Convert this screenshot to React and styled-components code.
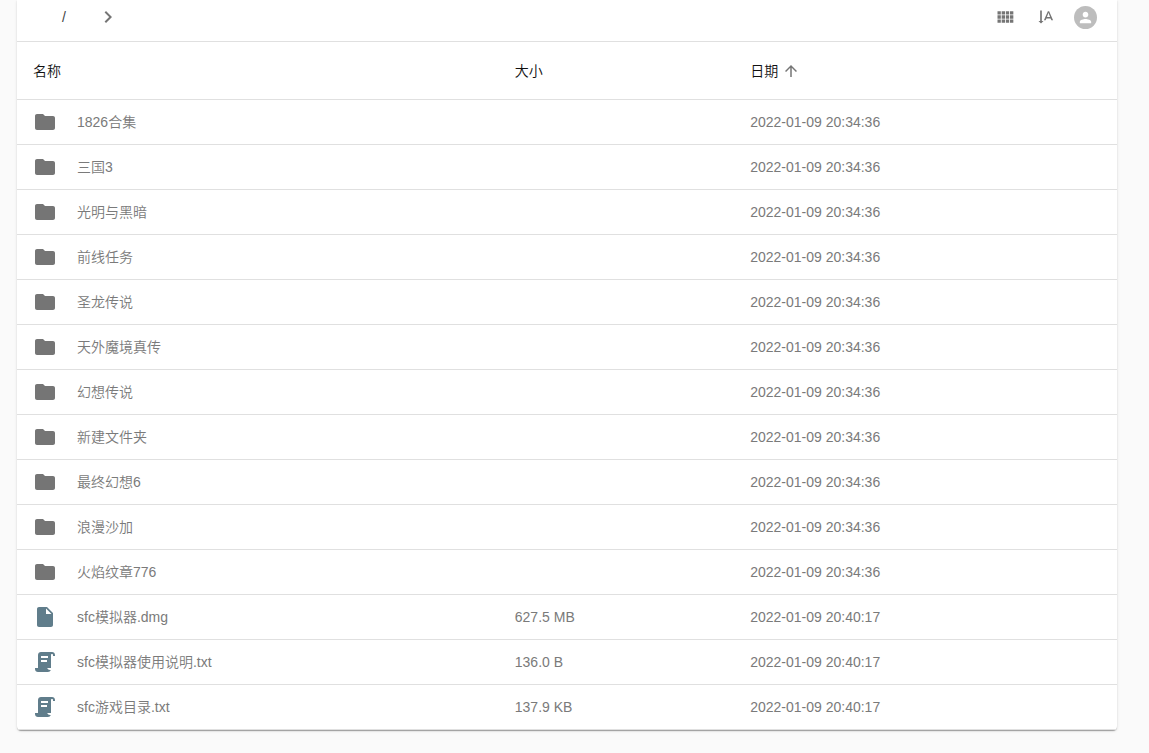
// Import necessary libraries
import React from 'react';
import styled, { createGlobalStyle } from 'styled-components';
import {
  MdArrowUpward,
  MdChevronRight,
  MdFolder,
  MdInsertDriveFile,
  MdPerson,
  MdTextRotateVertical,
} from 'react-icons/md';

const GlobalStyle = createGlobalStyle`
  * {
    box-sizing: border-box;
  }

  body {
    margin: 0;
    background: #fafafa;
    font-family: 'Liberation Sans', 'Noto Sans CJK SC', sans-serif;
    font-size: 14px;
    line-height: 20px;
  }
`;

// Styled Components
const Page = styled.main`
  padding: 0 32px 22px 17px;
`;

const Card = styled.section`
  background: #fff;
  border-radius: 0 0 4px 4px;
  box-shadow: 0 2px 1px -1px rgba(0, 0, 0, 0.2), 0 1px 1px 0 rgba(0, 0, 0, 0.14),
    0 1px 3px 0 rgba(0, 0, 0, 0.12);
`;

const Toolbar = styled.header`
  display: flex;
  align-items: center;
  justify-content: space-between;
  padding: 0 20px 7px 34px;
  border-bottom: 1px solid #e0e0e0;
`;

const Breadcrumb = styled.nav`
  display: flex;
  align-items: center;
  gap: 19px;
  color: #757575;
`;

const Actions = styled.div`
  display: flex;
  align-items: center;
  gap: 1px;
`;

const PlainButton = styled.button`
  display: inline-flex;
  align-items: center;
  justify-content: center;
  padding: 0;
  border: none;
  background: none;
  color: inherit;
  font: inherit;
  cursor: pointer;
`;

const PathButton = styled(PlainButton)`
  width: 26px;
  height: 34px;
  color: #424242;
`;

const IconButton = styled(PlainButton)`
  padding: 7px 10px;
  color: #757575;
`;

const Avatar = styled(PlainButton)`
  width: 23px;
  height: 23px;
  margin-left: 7px;
  border-radius: 50%;
  background: #bdbdbd;
  color: #fff;
`;

const Table = styled.table`
  width: 100%;
  table-layout: fixed;
  border-collapse: separate;
  border-spacing: 0;
`;

const HeadCell = styled.th`
  width: ${({ $width }) => $width};
  height: 58px;
  padding: 0 16px;
  border-bottom: 1px solid #e0e0e0;
  color: #111;
  font-weight: 350;
  text-align: left;
`;

const SortButton = styled(PlainButton)`
  gap: 4px;

  svg {
    color: #757575;
  }
`;

const Cell = styled.td`
  height: 45px;
  padding: 0 16px;
  border-bottom: 1px solid #e0e0e0;
  color: #7a7a7a;
  font-weight: 350;
`;

const FileName = styled.div`
  display: flex;
  align-items: center;
  gap: 20px;

  svg {
    flex-shrink: 0;
    color: ${({ $folder }) => ($folder ? '#757575' : '#607d8b')};
  }
`;

const ViewGridIcon = () => (
  <svg width="20" height="20" viewBox="0 0 24 24" fill="currentColor" aria-hidden="true">
    <path d="M3 9h4V5H3v4zm0 5h4v-4H3v4zm5 0h4v-4H8v4zm5 0h4v-4h-4v4zM8 9h4V5H8v4zm5-4v4h4V5h-4zm5 9h4v-4h-4v4zM3 19h4v-4H3v4zm5 0h4v-4H8v4zm5 0h4v-4h-4v4zm5 0h4v-4h-4v4zm0-14v4h4V5h-4z" />
  </svg>
);

const ScriptIcon = () => (
  <svg width="24" height="24" viewBox="0 0 24 24" fill="currentColor" aria-hidden="true">
    <path d="M17.8 20C17.4 21.2 16.3 22 15 22H5C3.3 22 2 20.7 2 19V18H14.2C14.6 19.2 15.7 20 17 20H17.8M19 2C20.7 2 22 3.3 22 5V6H20V5C20 4.4 19.6 4 19 4S18 4.4 18 5V18H5V5C5 3.3 6.3 2 8 2H19M8 6V8H15V6H8M8 10V12H14V10H8Z" />
  </svg>
);

const icons = {
  folder: <MdFolder size={24} />,
  file: <MdInsertDriveFile size={24} />,
  text: <ScriptIcon />,
};

const folderDate = '2022-01-09 20:34:36';
const fileDate = '2022-01-09 20:40:17';

const folders = [
  '1826合集',
  '三国3',
  '光明与黑暗',
  '前线任务',
  '圣龙传说',
  '天外魔境真传',
  '幻想传说',
  '新建文件夹',
  '最终幻想6',
  '浪漫沙加',
  '火焰纹章776',
];

const items = [
  ...folders.map((name) => ({ name, type: 'folder', size: '', date: folderDate })),
  { name: 'sfc模拟器.dmg', type: 'file', size: '627.5 MB', date: fileDate },
  { name: 'sfc模拟器使用说明.txt', type: 'text', size: '136.0 B', date: fileDate },
  { name: 'sfc游戏目录.txt', type: 'text', size: '137.9 KB', date: fileDate },
];

// Component
const App = () => {
  return (
    <>
      <GlobalStyle />
      <Page>
        <Card>
          <Toolbar>
            <Breadcrumb>
              <PathButton type="button">/</PathButton>
              <MdChevronRight size={24} />
            </Breadcrumb>
            <Actions>
              <IconButton type="button" aria-label="视图">
                <ViewGridIcon />
              </IconButton>
              <IconButton type="button" aria-label="排序">
                <MdTextRotateVertical size={20} />
              </IconButton>
              <Avatar type="button" aria-label="用户">
                <MdPerson size={17} />
              </Avatar>
            </Actions>
          </Toolbar>

          <Table>
            <thead>
              <tr>
                <HeadCell $width="43.8%">
                  <SortButton type="button">名称</SortButton>
                </HeadCell>
                <HeadCell $width="21.4%">
                  <SortButton type="button">大小</SortButton>
                </HeadCell>
                <HeadCell $width="34.8%" aria-sort="ascending">
                  <SortButton type="button">
                    日期
                    <MdArrowUpward size={18} />
                  </SortButton>
                </HeadCell>
              </tr>
            </thead>
            <tbody>
              {items.map((item) => (
                <tr key={item.name}>
                  <Cell>
                    <FileName $folder={item.type === 'folder'}>
                      {icons[item.type]}
                      <span>{item.name}</span>
                    </FileName>
                  </Cell>
                  <Cell>{item.size}</Cell>
                  <Cell>{item.date}</Cell>
                </tr>
              ))}
            </tbody>
          </Table>
        </Card>
      </Page>
    </>
  );
};

export default App;
